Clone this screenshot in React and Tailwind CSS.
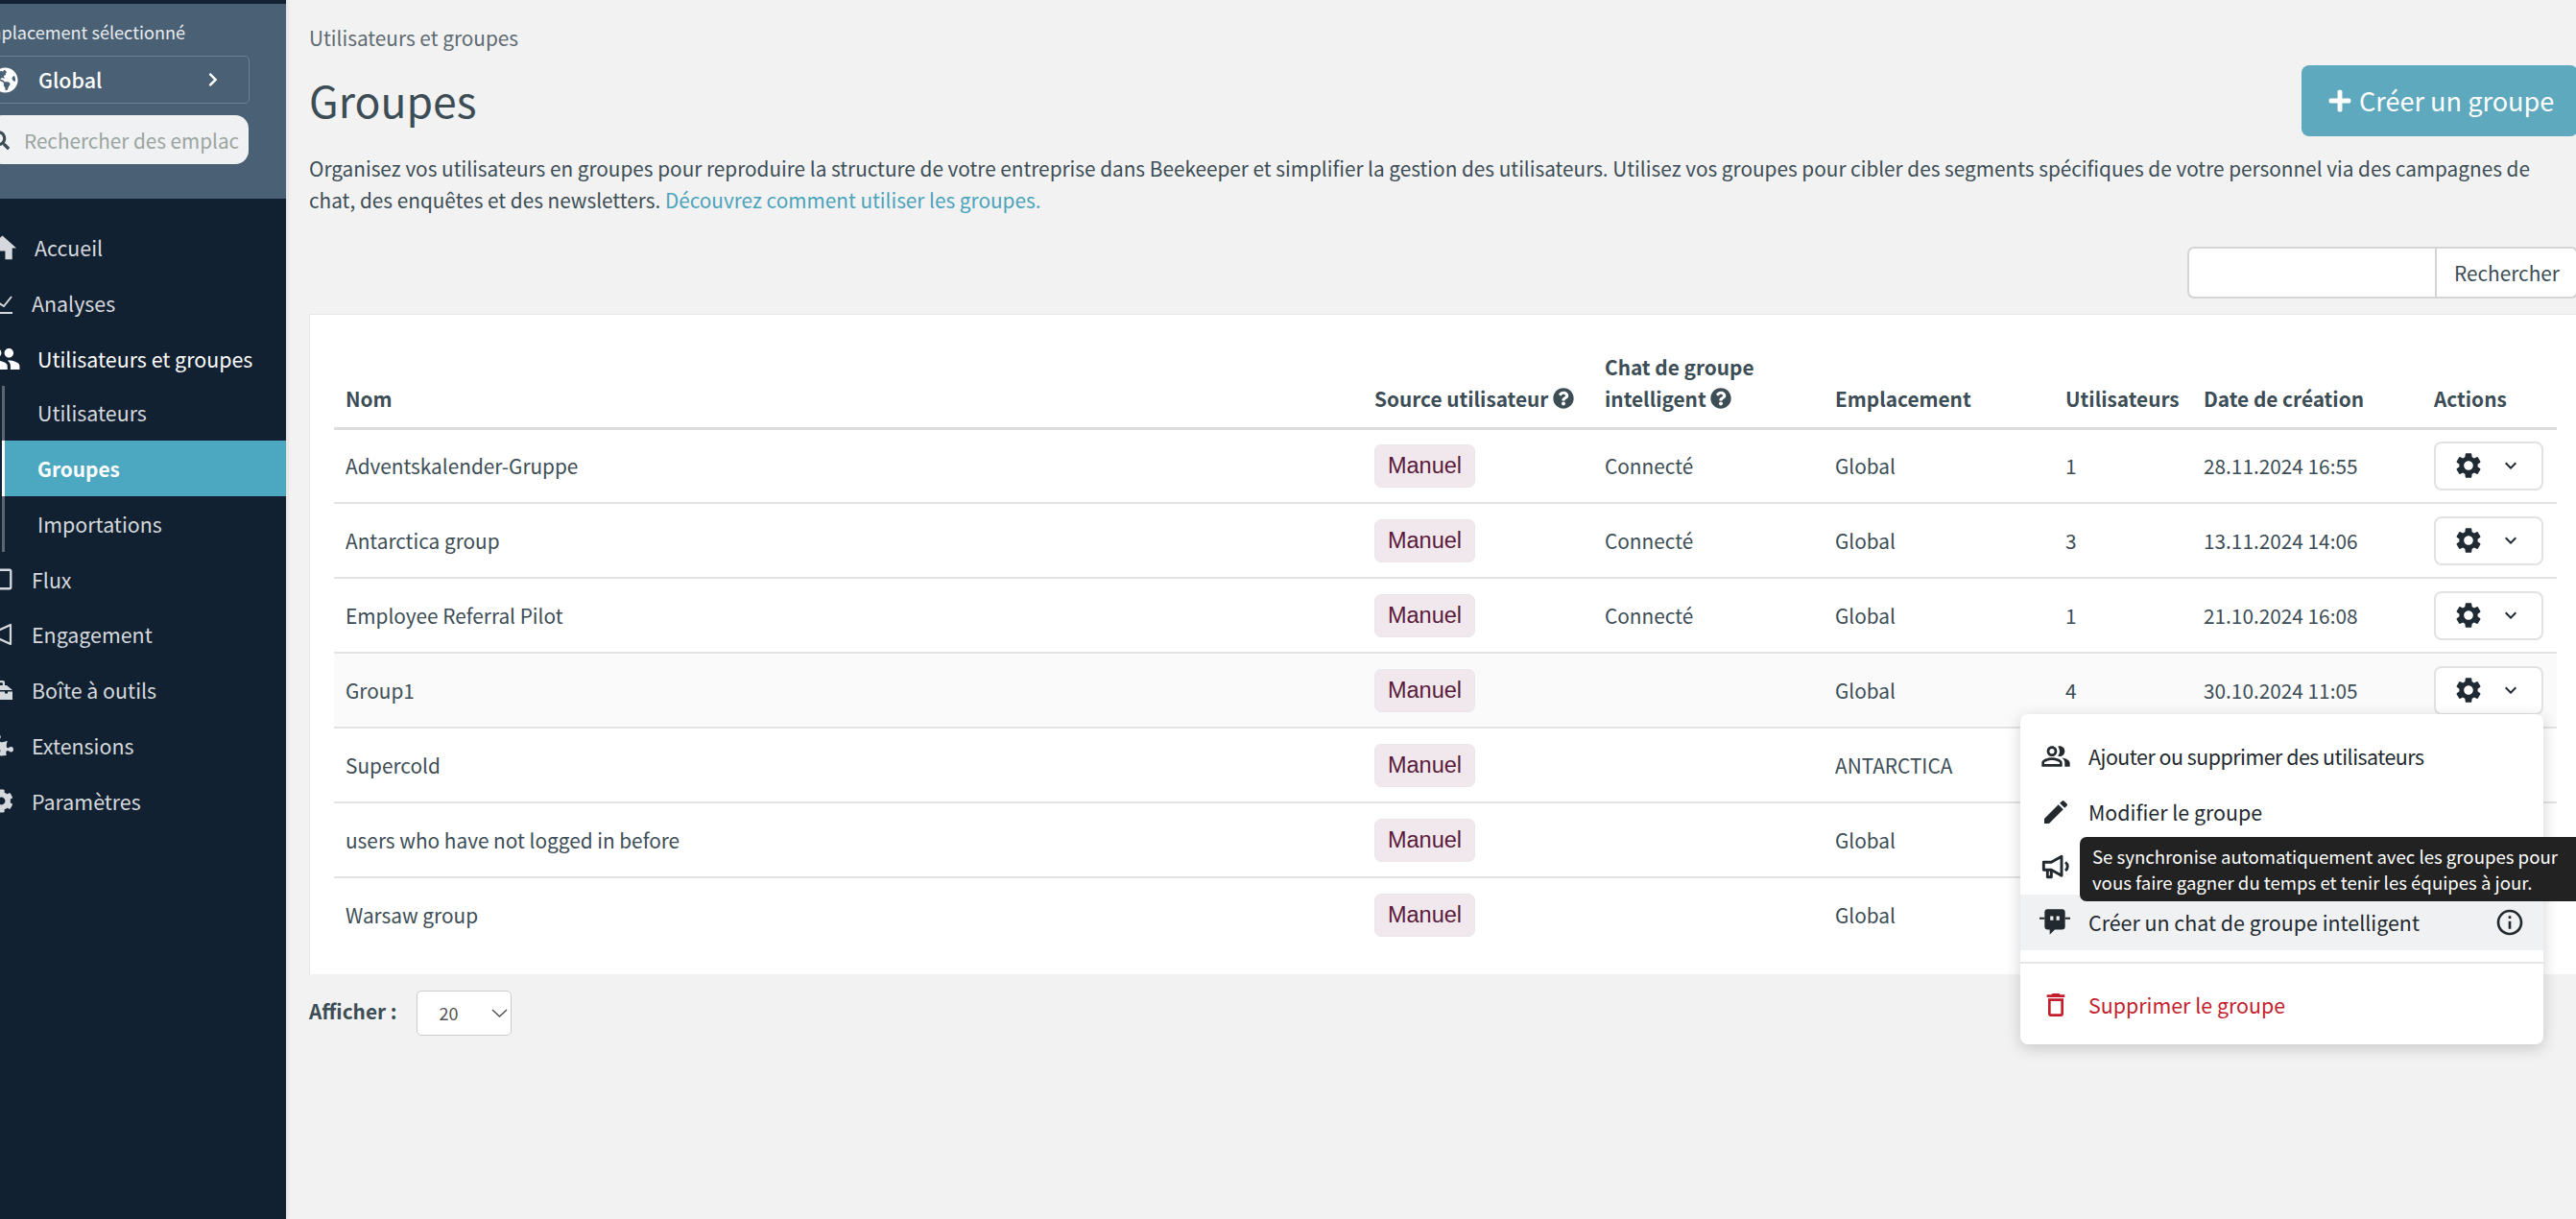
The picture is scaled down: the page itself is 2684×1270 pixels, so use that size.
import React from 'react';
import { FaGlobeAmericas, FaCog, FaQuestionCircle, FaPuzzlePiece, FaPlus, FaChevronRight, FaSearch, FaRegSquare } from 'react-icons/fa';
import { MdHome, MdPeople, MdEdit, MdOutlinePeopleAlt, MdOutlineDelete, MdInfoOutline, MdKeyboardArrowDown, MdSettings } from 'react-icons/md';

const Check = () => (
  <svg className="shrink-0" width="24" height="24" viewBox="0 0 24 24" fill="none" stroke="currentColor" strokeWidth="2">
    <path d="M7 10l8 5 8-10" />
    <path d="M0 22h24" />
  </svg>
);
const Mega = () => (
  <svg className="shrink-0" width="24" height="24" viewBox="0 0 24 24" fill="none" stroke="currentColor" strokeWidth="2.2" strokeLinejoin="round">
    <path d="M3 8h6l13-6v20L9 16H3z" />
  </svg>
);
const Toolbox = () => (
  <svg className="shrink-0" width="24" height="24" viewBox="0 0 24 24" fill="currentColor">
    <path d="M8 7V4a2 2 0 0 1 2-2h4a2 2 0 0 1 2 2v3h2l6 5H0l6-5zm2.2 0h3.6V4.200h-3.600z" />
    <path d="M0 13.500h5v2h3v-2h8v2h3v-2h5V22H0z" />
  </svg>
);
const Bot = () => (
  <svg className="shrink-0" width="32" height="32" viewBox="0 0 30 30" fill="currentColor">
    <path fillRule="evenodd" d="M8 2h14a3 3 0 0 1 3 3v14a3 3 0 0 1-3 3h-7l-5 5v-5H8a3 3 0 0 1-3-3V5a3 3 0 0 1 3-3zm2.500 7v4h3V9zm6 0v4h3V9z" />
    <path d="M0 10h5v2H0zM25 10h5v2h-5z" />
  </svg>
);
const Campaign = () => (
  <svg className="shrink-0" width="32" height="32" viewBox="0 0 24 24" fill="none" stroke="currentColor" strokeWidth="2.2" strokeLinejoin="round">
    <path d="M2.500 8.500h6l8-4.500v15l-8-4.500h-6z" />
    <path d="M5.500 14.500V20h3v-5.500" />
    <path d="M19.500 8.500a4 4 0 0 1 0 6.500" />
  </svg>
);

const rows = [
  ['Adventskalender-Gruppe', 'Connecté', 'Global', '1', '28.11.2024 16:55'],
  ['Antarctica group', 'Connecté', 'Global', '3', '13.11.2024 14:06'],
  ['Employee Referral Pilot', 'Connecté', 'Global', '1', '21.10.2024 16:08'],
  ['Group1', '', 'Global', '4', '30.10.2024 11:05'],
  ['Supercold', '', 'ANTARCTICA', '', ''],
  ['users who have not logged in before', '', 'Global', '', ''],
  ['Warsaw group', '', 'Global', '', ''],
];

function NavItem({ icon, label, ml, iw = 'w-[24px]', strong }) {
  return (
    <div className={`flex h-[57.7px] items-center -ml-[11px] ${strong ? 'text-white' : 'text-[#d5d9dd]'}`}>
      <span className={`flex ${iw} justify-center`}>{icon}</span>
      <span className={`${ml} text-[21.4px] leading-[32px]`}>{label}</span>
    </div>
  );
}

function Menu() {
  return (
    <div className="absolute right-0 top-[50px] z-10 h-[344px] w-[545px] rounded-[8px] bg-white pt-[16px] shadow-[0_4px_16px_rgba(0,0,0,0.18)] text-left text-[21.4px] leading-[32px] text-[#22292f]">
      <div className="flex h-[57.5px] items-center pl-[21px]">
        <MdOutlinePeopleAlt size={32} />
        <span className="ml-[18px] tracking-[-0.5px]">Ajouter ou supprimer des utilisateurs</span>
      </div>
      <div className="flex h-[57.5px] items-center pl-[21px]">
        <MdEdit size={32} />
        <span className="ml-[18px]">Modifier le groupe</span>
      </div>
      <div className="flex h-[57.5px] items-center pl-[21px]">
        <Campaign />
      </div>
      <div className="flex h-[58px] items-center bg-[#f0f1f3] pl-[20px]">
        <Bot />
        <span className="ml-[19px]">Créer un chat de groupe intelligent</span>
        <span className="ml-auto mr-[19px]"><MdInfoOutline size={32} /></span>
      </div>
      <div className="mt-[12px] border-t-2 border-[#e3e5e8]" />
      <div className="mt-[14px] flex h-[58px] items-center pl-[21px] text-[#c41e2e]">
        <MdOutlineDelete size={32} />
        <span className="ml-[18px]">Supprimer le groupe</span>
      </div>
      <div className="absolute left-[62px] top-[128px] h-[67px] w-[530px] whitespace-nowrap rounded-l-[7px] bg-[#222222] pl-[13px] pt-[6px] text-[18.600px] leading-[27px] text-white">
        Se synchronise automatiquement avec les groupes pour<br />vous faire gagner du temps et tenir les équipes à jour.
      </div>
    </div>
  );
}

export default function App() {
  return (
    <div className="flex h-[1270px] w-[2684px] overflow-hidden bg-[#f2f2f2] font-['Noto_Sans_CJK_SC','Noto_Sans',sans-serif] text-[#3c4d56]">
      <aside className="h-full w-[298px] shrink-0 overflow-hidden bg-[#122131] pt-[4px] shadow-[2px_0_4px_rgba(0,0,0,0.08)]">
        <div className="h-[203px] bg-[#4a6074] pt-[13px]">
          <div className="-ml-[26px] w-[260px] whitespace-nowrap text-[18.100px] leading-[32px] text-[#e8ebee]">Emplacement sélectionné</div>
          <div className="-ml-[5px] mt-[9px] flex h-[50px] w-[265px] items-center rounded-[5px] border border-[#6c8296] text-white">
            <span className="-ml-[4px]"><FaGlobeAmericas size={27} /></span>
            <span className="ml-[21px] text-[21.4px] leading-[32px] font-medium">Global</span>
            <span className="ml-auto mr-[29px]"><FaChevronRight size={16} /></span>
          </div>
          <div className="-ml-[12px] mt-[12px] flex h-[51px] w-[271px] items-center overflow-hidden rounded-[14px] bg-[#f0f1f3] text-[#3c4d56]">
            <span className="ml-[2px]"><FaSearch size={20} /></span>
            <span className="ml-[15px] whitespace-nowrap text-[20.7px] leading-[32px] text-[#9aa5a0]">Rechercher des emplac</span>
          </div>
        </div>
        <nav className="pt-[22.5px]">
          <NavItem icon={<MdHome size={35} className="shrink-0" />} iw="w-[26px]" label="Accueil" ml="ml-[21px]" />
          <NavItem icon={<Check />} label="Analyses" ml="ml-[20px]" />
          <NavItem icon={<MdPeople size={38} className="shrink-0" />} iw="w-[27px]" label="Utilisateurs et groupes" ml="ml-[23px]" strong />
          <div className="-mt-[1px] ml-[2px] border-l-[3px] border-[#5a6773] text-[21.4px] leading-[32px] text-[#d5d9dd]">
            <div className="flex h-[57.7px] items-center pl-[34px]">Utilisateurs</div>
            <div className="-ml-[3px] flex h-[58px] items-center border-l-[3px] border-white bg-[#4ba8c0] pl-[34px] font-bold text-white text-[20.8px]">Groupes</div>
            <div className="flex h-[57.7px] items-center pl-[34px]">Importations</div>
          </div>
          <NavItem icon={<FaRegSquare size={25} className="shrink-0" />} label="Flux" ml="ml-[20px]" />
          <NavItem icon={<Mega />} label="Engagement" ml="ml-[20px]" />
          <NavItem icon={<Toolbox />} label="Boîte à outils" ml="ml-[20px]" />
          <NavItem icon={<FaPuzzlePiece size={25} className="shrink-0" />} label="Extensions" ml="ml-[20px]" />
          <NavItem icon={<FaCog size={25} className="shrink-0" />} label="Paramètres" ml="ml-[20px]" />
        </nav>
      </aside>

      <main className="min-w-0 flex-1 overflow-hidden pl-[24px]">
        <div className="pt-[23px] text-[20.8px] leading-[32px] text-[#5e6b72]">Utilisateurs et groupes</div>
        <div className="mt-[13px] flex h-[74px] items-center justify-between">
          <h1 className="-mt-[2px] text-[44.500px] leading-[60px]">Groupes</h1>
          <button className="-mr-[2px] flex h-[74px] w-[288px] items-center rounded-[8px] bg-[#5ea9bd] pl-[27px] text-[27.100px] leading-[40px] text-white">
            <FaPlus size={26} />
            <span className="ml-[7px]">Créer un groupe</span>
          </button>
        </div>
        <p className="mt-[17px] w-[2344px] text-[20.77px] leading-[33px]">
          Organisez vos utilisateurs en groupes pour reproduire la structure de votre entreprise dans Beekeeper et simplifier la gestion des utilisateurs. Utilisez vos groupes pour cibler des segments spécifiques de votre personnel via des campagnes de chat, des enquêtes et des newsletters. <span className="text-[#4aa3bb]">Découvrez comment utiliser les groupes.</span>
        </p>
        <div className="mt-[32px] flex justify-end">
          <div className="-mr-[2px] flex h-[54px] w-[407px] overflow-hidden rounded-[7px] border-2 border-[#d4d4d4] bg-white">
            <div className="w-[258px] border-r-2 border-[#d4d4d4]" />
            <div className="pl-[18px] text-[20.8px] leading-[50px]">Rechercher</div>
          </div>
        </div>
        <div className="mt-[16px] h-[688px] border-t border-l border-[#e6e6e6] bg-white pl-[25px] pt-[2px]">
          <table className="w-[2316px] table-fixed border-collapse text-left text-[20.8px] leading-[33px]">
            <colgroup>
              <col className="w-[1072px]" />
              <col className="w-[240px]" />
              <col className="w-[240px]" />
              <col className="w-[240px]" />
              <col className="w-[144px]" />
              <col className="w-[240px]" />
              <col className="w-[140px]" />
            </colgroup>
            <thead>
              <tr className="h-[116px] border-b-[3px] border-[#dddddd] align-bottom">
                <th className="px-[12px] pb-[13px] font-bold">Nom</th>
                <th className="px-[12px] pb-[13px] font-bold whitespace-nowrap">Source utilisateur <FaQuestionCircle className="inline align-[-2px]" size={22} /></th>
                <th className="px-[12px] pb-[13px] font-bold">Chat de groupe<br />intelligent <FaQuestionCircle className="inline align-[-2px]" size={22} /></th>
                <th className="px-[12px] pb-[13px] font-bold">Emplacement</th>
                <th className="px-[12px] pb-[13px] font-bold">Utilisateurs</th>
                <th className="px-[12px] pb-[13px] font-bold">Date de création</th>
                <th className="px-[12px] pb-[13px] font-bold">Actions</th>
              </tr>
            </thead>
            <tbody>
              {rows.map((r, i) => (
                <tr key={r[0]} className={`h-[78px] border-b-2 border-[#e3e3e3] last:border-b-0 ${i === 3 ? 'bg-[#fafafa]' : ''}`}>
                  <td className="px-[12px]">{r[0]}</td>
                  <td className="px-[12px]">
                    <span className="inline-flex h-[45px] w-[105px] items-center justify-center rounded-[7px] border border-[#ebe6e9] bg-[#f0e8ec] font-['Liberation_Sans',sans-serif] text-[23.500px] text-[#5a1a3a]">Manuel</span>
                  </td>
                  <td className="px-[12px]">{r[1]}</td>
                  <td className="px-[12px]">{r[2]}</td>
                  <td className="px-[12px]">{r[3]}</td>
                  <td className="px-[12px]">{r[4]}</td>
                  <td className="px-[12px]">
                    {i < 4 && (
                      <div className="relative h-[51px] w-[114px]">
                        <div className="flex h-[51px] w-[114px] items-center rounded-[8px] border-2 border-[#e2e2e2] bg-white pl-[18px] text-[#1f2a33]">
                          <MdSettings size={32} />
                          <span className="ml-[16px]"><MdKeyboardArrowDown size={24} /></span>
                        </div>
                        {i === 3 && <Menu />}
                      </div>
                    )}
                  </td>
                </tr>
              ))}
            </tbody>
          </table>
        </div>
        <div className="mt-[17px] flex items-center">
          <span className="mb-[6px] text-[20.8px] leading-[32px] font-bold">Afficher :</span>
          <div className="ml-[20px] flex h-[47px] w-[99px] items-center rounded-[5px] border border-[#cccccc] bg-white pl-[23px] text-[18px] text-[#555555]">
            <span>20</span>
            <svg className="ml-[34px]" width="17" height="9" viewBox="0 0 17 9" fill="none" stroke="#555555" strokeWidth="1.500"><path d="M1 1l7.500 7L16 1" /></svg>
          </div>
        </div>
      </main>
    </div>
  );
}
